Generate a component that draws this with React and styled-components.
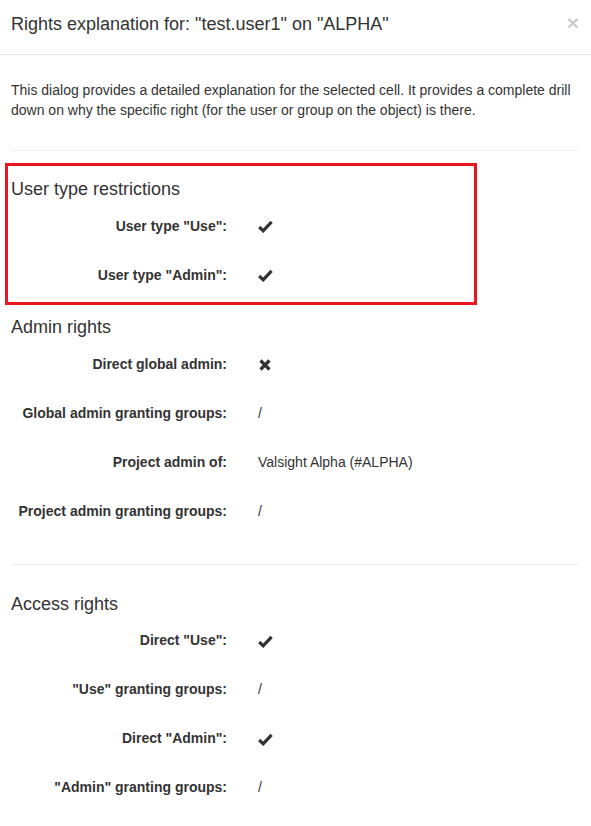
import styled, { createGlobalStyle } from 'styled-components';

const GlobalStyle = createGlobalStyle`
    html, body {
        margin: 0;
        padding: 0;
        background: #fff;
    }
    body {
        font-family: "Liberation Sans", Arial, sans-serif;
        font-size: 14px;
        line-height: 1.42857;
        color: #333;
    }
`

const Modal = styled.div`
    width: 591px;
    background: #fff;
`

const Header = styled.div`
    display: flex;
    align-items: flex-start;
    justify-content: space-between;
    padding: 11px 12px 17px 11px;
    border-bottom: 1px solid #e5e5e5;
    height: 26px;
`

const Title = styled.h4`
    margin: 0;
    font-size: 18px;
    font-weight: normal;
    line-height: 26px;
`

const Close = styled.button`
    border: 0;
    background: transparent;
    padding: 0;
    margin-top: 1px;
    font-family: "Liberation Sans", Arial, sans-serif;
    font-size: 21px;
    font-weight: bold;
    line-height: 1;
    color: #000;
    opacity: 0.2;
    cursor: pointer;
`

const Body = styled.div`
    padding: 26px 12px 20px 11px;
`

const Intro = styled.p`
    margin: 0;
`

const Divider = styled.hr`
    border: 0;
    border-top: 1px solid #eee;
    margin: ${p => p.$top}px 0 ${p => p.$bottom}px;
`

const Section = styled.div`
    position: relative;
    display: flex;
    flex-direction: column;
    padding-top: 10px;

    ${p => p.$marked && `
        &::after {
            content: '';
            position: absolute;
            top: -7px;
            left: -6px;
            right: 102px;
            bottom: 3px;
            border: 3px solid #e8161f;
            pointer-events: none;
        }
    `}
`

const Heading = styled.h4`
    margin: 0 0 10px;
    font-size: 18px;
    font-weight: normal;
    line-height: 1.1;
`

const Row = styled.div`
    display: grid;
    grid-template-columns: 216px 1fr;
    column-gap: 31px;
    min-height: 34px;
    margin-bottom: 15px;
`

const Label = styled.label`
    padding-top: 7px;
    text-align: right;
    font-weight: bold;
`

const Value = styled.div`
    padding-top: 7px;
    display: flex;
    align-items: center;
    height: 20px;
`

const Check = () => (
    <svg width="15" height="13" viewBox="0 0 15 13">
        <path d="M1.2 7 L5.2 10.8 L13.6 1.8" fill="none" stroke="#333" strokeWidth="3.2" strokeLinejoin="miter" />
    </svg>
)

const Cross = () => (
    <svg width="12" height="12" viewBox="0 0 12 12" style={{ marginLeft: 1 }}>
        <path d="M1.5 1.5 L10.5 10.5 M10.5 1.5 L1.5 10.5" fill="none" stroke="#333" strokeWidth="3.2" />
    </svg>
)

const sections = [
    {
        title: 'User type restrictions',
        marked: true,
        rows: [
            ['User type "Use":', 'check'],
            ['User type "Admin":', 'check'],
        ],
    },
    {
        title: 'Admin rights',
        rows: [
            ['Direct global admin:', 'cross'],
            ['Global admin granting groups:', '/'],
            ['Project admin of:', 'Valsight Alpha (#ALPHA)'],
            ['Project admin granting groups:', '/'],
        ],
    },
    {
        title: 'Access rights',
        divider: true,
        rows: [
            ['Direct "Use":', 'check'],
            ['"Use" granting groups:', '/'],
            ['Direct "Admin":', 'check'],
            ['"Admin" granting groups:', '/'],
        ],
    },
]

const renderValue = v => {
    if (v === 'check') return <Check />
    if (v === 'cross') return <Cross />
    return v
}

export default function App() {
    return (
        <Modal>
            <GlobalStyle />
            <Header>
                <Title>Rights explanation for: "test.user1" on "ALPHA"</Title>
                <Close aria-label="Close">×</Close>
            </Header>
            <Body>
                <Intro>
                    This dialog provides a detailed explanation for the selected cell. It provides a complete drill down on why the specific right (for the user or group on the object) is there.
                </Intro>
                <Divider $top={29} $bottom={19} />
                {sections.map(s => (
                    <div key={s.title}>
                        {s.divider && <Divider $top={20} $bottom={20} />}
                        <Section $marked={s.marked}>
                            <Heading>{s.title}</Heading>
                            {s.rows.map(([label, value]) => (
                                <Row key={label}>
                                    <Label>{label}</Label>
                                    <Value>{renderValue(value)}</Value>
                                </Row>
                            ))}
                        </Section>
                    </div>
                ))}
            </Body>
        </Modal>
    )
}
